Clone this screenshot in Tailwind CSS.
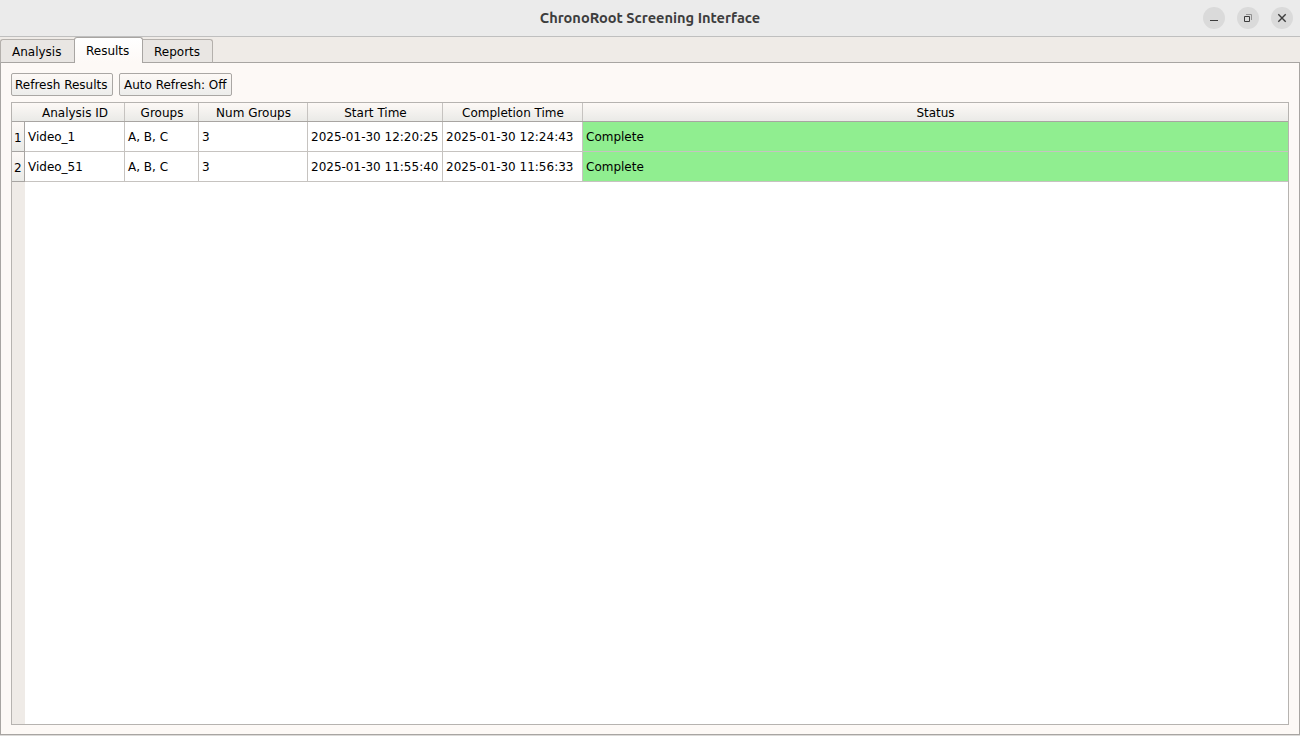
<!DOCTYPE html>
<html lang="en">
<head>
<meta charset="utf-8">
<title>ChronoRoot Screening Interface</title>
<script src="https://cdn.jsdelivr.net/npm/@tailwindcss/browser@4"></script>
</head>
<body class="w-[1300px] h-[736px] overflow-hidden bg-[#efebe7] flex flex-col font-['DejaVu_Sans',sans-serif] text-[12px] leading-[14px] text-black whitespace-nowrap">
<header class="h-[37px] shrink-0 bg-[#ebebeb] border-b border-[#bfbfbf] grid grid-cols-[1fr_auto_1fr] items-center">
  <span></span>
  <h1 class="w-[222px] font-['Ubuntu','Noto_Sans',sans-serif] font-bold text-[14.6px] leading-[20px] text-[#3d3d3d] text-center">ChronoRoot Screening Interface</h1>
  <div class="flex justify-end gap-3 pr-[7px]">
    <svg class="size-[22px]" viewBox="0 0 22 22"><circle cx="11" cy="11" r="11" fill="#dadada"/><path d="M7 13.500h8" stroke="#3d3d3d" fill="none"/></svg>
    <svg class="size-[22px]" viewBox="0 0 22 22"><circle cx="11" cy="11" r="11" fill="#dadada"/><path d="M7.500 9.500h5v5h-5z" stroke="#3d3d3d" fill="none"/><path d="M9 7.500h5.500V13" stroke="#929292" fill="none"/></svg>
    <svg class="size-[22px]" viewBox="0 0 22 22"><circle cx="11" cy="11" r="11" fill="#dadada"/><path d="M7.300 7.300l7.400 7.400M14.700 7.300l-7.400 7.400" stroke="#3d3d3d" stroke-width="1.400" fill="none"/></svg>
  </div>
</header>
<nav class="h-[26px] shrink-0 flex items-end relative z-10">
  <div class="w-[74px] h-6 border border-r-0 border-[#b4b0ac] border-b-[#a8a5a2] rounded-tl-[3px] bg-[#e9e6e3] pt-[5px] pl-[11px]">Analysis</div>
  <div class="w-[69px] h-[26px] border border-b-0 border-[#a8a5a2] rounded-t-[3px] bg-linear-to-b from-white to-[#fdf9f6] pt-[6px] pl-[11px]">Results</div>
  <div class="w-[70px] h-6 border border-l-0 border-[#b4b0ac] border-b-[#a8a5a2] rounded-tr-[3px] bg-[#e9e6e3] pt-[5px] pl-[11px]">Reports</div>
</nav>
<main class="-mt-px h-[673px] shrink-0 border border-[#a8a5a2] bg-[#fdf9f6] px-[10px] pt-[10px] flex flex-col">
  <div class="flex gap-[6px] h-[23px] shrink-0">
    <button class="w-[102px] border border-[#aaa7a4] rounded-[2px] bg-linear-to-b from-[#fdf9f6] to-[#ededeb] pl-[3px] text-left">Refresh Results</button>
    <button class="w-[113px] border border-[#aaa7a4] rounded-[2px] bg-linear-to-b from-[#fdf9f6] to-[#ededeb] pl-[4px] text-left">Auto Refresh: Off</button>
  </div>
  <section class="mt-[6px] w-[1278px] h-[623px] shrink-0 border border-[#b6b3b0] bg-white flex flex-col">
    <div class="h-[19px] shrink-0 grid grid-rows-[18px] grid-cols-[13px_100px_74px_109px_135px_140px_1fr] bg-linear-to-b from-[#fdf9f6] to-[#eaeae7] border-b border-[#a8a5a2] text-center leading-[20px]">
      <span></span>
      <span class="border-r border-[#c6c3c0] pl-px">Analysis ID</span>
      <span class="border-r border-[#c6c3c0] pl-px">Groups</span>
      <span class="border-r border-[#c6c3c0] pl-px">Num Groups</span>
      <span class="border-r border-[#c6c3c0] pl-px">Start Time</span>
      <span class="border-r border-[#c6c3c0] pl-px">Completion Time</span>
      <span>Status</span>
    </div>
    <div class="h-[30px] shrink-0 grid grid-rows-[30px] grid-cols-[13px_100px_74px_109px_135px_140px_1fr] leading-[30px]">
      <span class="border-r border-b border-[#a8a5a2] bg-linear-to-b from-[#fdf9f6] to-[#eaeae7] pl-[2px] leading-[32px]">1</span>
      <span class="border-r border-b border-[#c6c3c0] pl-[3px]">Video_1</span>
      <span class="border-r border-b border-[#c6c3c0] pl-[3px]">A, B, C</span>
      <span class="border-r border-b border-[#c6c3c0] pl-[3px]">3</span>
      <span class="border-r border-b border-[#c6c3c0] pl-[3px]">2025-01-30 12:20:25</span>
      <span class="border-r border-b border-[#c6c3c0] pl-[3px]">2025-01-30 12:24:43</span>
      <span class="border-b border-[#c6c3c0] bg-[#90ee90] pl-[3px]">Complete</span>
    </div>
    <div class="h-[30px] shrink-0 grid grid-rows-[30px] grid-cols-[13px_100px_74px_109px_135px_140px_1fr] leading-[30px]">
      <span class="border-r border-b border-[#a8a5a2] bg-linear-to-b from-[#fdf9f6] to-[#eaeae7] pl-[2px] leading-[32px]">2</span>
      <span class="border-r border-b border-[#c6c3c0] pl-[3px]">Video_51</span>
      <span class="border-r border-b border-[#c6c3c0] pl-[3px]">A, B, C</span>
      <span class="border-r border-b border-[#c6c3c0] pl-[3px]">3</span>
      <span class="border-r border-b border-[#c6c3c0] pl-[3px]">2025-01-30 11:55:40</span>
      <span class="border-r border-b border-[#c6c3c0] pl-[3px]">2025-01-30 11:56:33</span>
      <span class="border-b border-[#c6c3c0] bg-[#90ee90] pl-[3px]">Complete</span>
    </div>
    <div class="flex-1 w-[13px] bg-[#efebe7]"></div>
  </section>
</main>
<div class="h-px bg-[#dcdad8]"></div>
</body>
</html>
